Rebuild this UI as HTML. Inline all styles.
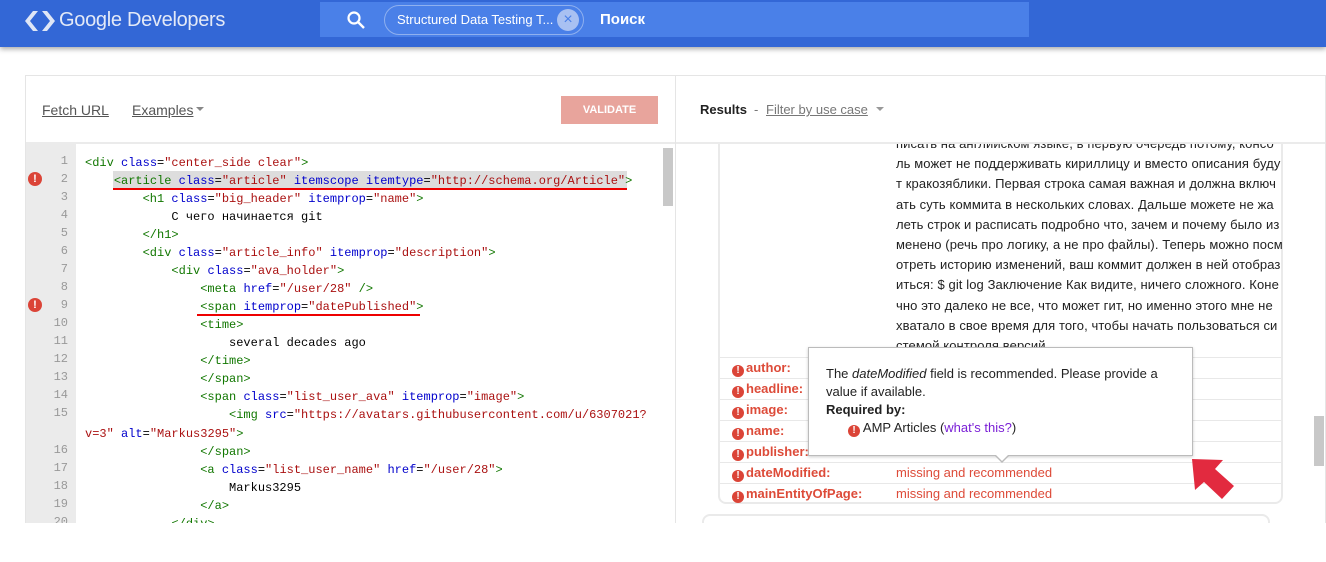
<!DOCTYPE html>
<html><head><meta charset="utf-8"><style>
*{margin:0;padding:0;box-sizing:border-box}
body{width:1326px;height:562px;background:#fff;font-family:"Liberation Sans",sans-serif;position:relative;overflow:hidden}
.hdr{position:absolute;left:0;top:0;width:1326px;height:47px;background:#3367d6;box-shadow:0 2px 5px rgba(0,0,0,.35)}
.logo{position:absolute;left:59px;top:9px;color:#e3e9f7;font-size:20px;letter-spacing:-.3px}
.sbox{position:absolute;left:320px;top:2px;width:709px;height:35px;background:#4a80e8}
.chip{position:absolute;left:384px;top:5px;width:200px;height:30px;border:1px solid #8fb0ef;border-radius:15px;color:#fff;font-size:13px;line-height:28px;padding-left:12px}
.chip .x{position:absolute;right:4px;top:3px;width:22px;height:22px;border-radius:50%;background:#a9c1f2;color:#4a80e8;text-align:center;line-height:21px;font-size:16px}
.poisk{position:absolute;left:600px;top:11px;color:#fff;font-size:15px;font-weight:bold}
.lp{position:absolute;left:25px;top:75px;width:651px;height:448px;border:1px solid #e5e5e5;border-bottom:none;overflow:hidden}
.rp{position:absolute;left:675px;top:75px;width:651px;height:448px;border:1px solid #e5e5e5;border-bottom:none;overflow:hidden}
.tb{position:absolute;left:0;top:0;width:100%;height:68px;border-bottom:2px solid #ebebeb;background:#fff;z-index:3}
.lnk{position:absolute;top:26px;font-size:14px;color:#555;text-decoration:underline}
.val{position:absolute;left:535px;top:20px;width:97px;height:28px;background:#e8a49c;color:#fff;font-size:11px;font-weight:bold;text-align:center;line-height:28px}
.gut{position:absolute;left:0;top:68px;width:50px;height:400px;background:#ebebeb}
.code{font-family:"Liberation Mono",monospace;font-size:12px;white-space:pre;position:absolute;color:#000}
.n{position:absolute;width:20px;text-align:right;left:48px;color:#999;font-family:"Liberation Mono",monospace;font-size:12px}
.t{color:#170}.a{color:#00c}.s{color:#a11}
.err{position:absolute;width:14px;height:14px;border-radius:50%;background:#db4437;color:#fff;font-size:11px;font-weight:bold;text-align:center;line-height:14px}
.sc{position:absolute;width:10px;height:58px;background:#c8c8c8}
.card{position:absolute;left:42px;top:40px;width:565px;height:388px;border:2px solid #eaeaea;border-radius:8px;background:#fff}
.desc{position:absolute;left:220px;top:58px;width:400px;font-size:13px;line-height:20.2px;color:#222;white-space:nowrap;letter-spacing:.1px}
.row{position:absolute;left:44px;width:561px;height:21px;border-top:1px solid #e8e8e8;font-size:13px;color:#dd4b39;font-weight:bold;line-height:20px}
.row .ic{display:inline-block;width:12px;height:12px;border-radius:50%;background:#db4437;color:#fff;font-size:10px;text-align:center;line-height:12px;margin:0 2px 0 12px;vertical-align:-1px}
.row .v{position:absolute;left:176px;font-weight:normal}
.tip{position:absolute;left:808px;top:347px;width:385px;height:109px;background:#fff;border:1px solid #bbb;box-shadow:0 1px 3px rgba(0,0,0,.2);font-size:13px;color:#222;padding:17px 0 0 17px;line-height:18px;z-index:5}
</style></head><body>
<div class="hdr">
<svg style="position:absolute;left:24px;top:10px" width="32" height="22" viewBox="0 0 32 22"><path d="M9 1L1 11l8 10h5L6 11l8-10z" fill="#dfe6f6"/><path d="M23 1l8 10-8 10h-5l8-10-8-10z" fill="#dfe6f6"/></svg>
<div class="logo">Google Developers</div>
<div class="sbox"></div>
<svg style="position:absolute;left:346px;top:10px" width="20" height="20" viewBox="0 0 20 20"><circle cx="8" cy="8" r="5.5" stroke="#fff" stroke-width="2.2" fill="none"/><path d="M12 12l6 6" stroke="#fff" stroke-width="2.4"/></svg>
<div class="chip">Structured Data Testing T...<span class="x">×</span></div>
<div class="poisk">Поиск</div>
</div>

<div class="lp">
<div class="tb"><span class="lnk" style="left:16px">Fetch URL</span><span class="lnk" style="left:106px">Examples</span><span style="position:absolute;left:170px;top:31px;border:4px solid transparent;border-top:4px solid #888"></span><div class="val">VALIDATE</div></div>
<div class="gut"></div>
</div>
<div style="position:absolute;left:113px;top:171px;width:514px;height:18px;background:#ddd"></div>
<div style="position:absolute;left:113px;top:188px;width:514px;height:2px;background:#e00"></div>
<div style="position:absolute;left:197px;top:314px;width:223px;height:2px;background:#e00"></div>
<div class="sc" style="left:663px;top:148px"></div>
<div class="err" style="left:28px;top:172px">!</div>
<div class="err" style="left:28px;top:298px">!</div>
<div style="position:absolute;left:0;top:0">
<div class="n" style="top:154px">1</div><div class="n" style="top:172px">2</div><div class="n" style="top:190px">3</div><div class="n" style="top:208px">4</div><div class="n" style="top:226px">5</div><div class="n" style="top:244px">6</div><div class="n" style="top:262px">7</div><div class="n" style="top:280px">8</div><div class="n" style="top:298px">9</div><div class="n" style="top:316px">10</div><div class="n" style="top:334px">11</div><div class="n" style="top:352px">12</div><div class="n" style="top:370px">13</div><div class="n" style="top:388px">14</div><div class="n" style="top:406px">15</div><div class="n" style="top:443px">16</div><div class="n" style="top:461px">17</div><div class="n" style="top:479px">18</div><div class="n" style="top:497px">19</div><div class="n" style="top:515px">20</div>
</div>
<div class="code" style="left:85px;top:154px;line-height:18px"><span class="t">&lt;div</span> <span class="a">class</span>=<span class="s">"center_side clear"</span><span class="t">&gt;</span>
    <span class="t">&lt;article</span> <span class="a">class</span>=<span class="s">"article"</span> <span class="a">itemscope</span> <span class="a">itemtype</span>=<span class="s">"http://schema.org/Article"</span><span class="t">&gt;</span>
        <span class="t">&lt;h1</span> <span class="a">class</span>=<span class="s">"big_header"</span> <span class="a">itemprop</span>=<span class="s">"name"</span><span class="t">&gt;</span>
            С чего начинается git
        <span class="t">&lt;/h1&gt;</span>
        <span class="t">&lt;div</span> <span class="a">class</span>=<span class="s">"article_info"</span> <span class="a">itemprop</span>=<span class="s">"description"</span><span class="t">&gt;</span>
            <span class="t">&lt;div</span> <span class="a">class</span>=<span class="s">"ava_holder"</span><span class="t">&gt;</span>
                <span class="t">&lt;meta</span> <span class="a">href</span>=<span class="s">"/user/28"</span> <span class="t">/&gt;</span>
                <span class="t">&lt;span</span> <span class="a">itemprop</span>=<span class="s">"datePublished"</span><span class="t">&gt;</span>
                <span class="t">&lt;time&gt;</span>
                    several decades ago
                <span class="t">&lt;/time&gt;</span>
                <span class="t">&lt;/span&gt;</span>
                <span class="t">&lt;span</span> <span class="a">class</span>=<span class="s">"list_user_ava"</span> <span class="a">itemprop</span>=<span class="s">"image"</span><span class="t">&gt;</span>
                    <span class="t">&lt;img</span> <span class="a">src</span>=<span class="s">"https://avatars.githubusercontent.com/u/6307021?</span></div>
<div class="code" style="left:85px;top:425px;line-height:18px"><span class="s">v=3"</span> <span class="a">alt</span>=<span class="s">"Markus3295"</span><span class="t">&gt;</span>
                <span class="t">&lt;/span&gt;</span>
                <span class="t">&lt;a</span> <span class="a">class</span>=<span class="s">"list_user_name"</span> <span class="a">href</span>=<span class="s">"/user/28"</span><span class="t">&gt;</span>
                    Markus3295
                <span class="t">&lt;/a&gt;</span>
            <span class="t">&lt;/div&gt;</span></div>
<div style="position:absolute;left:0;top:523px;width:1326px;height:39px;background:#fff"></div>

<div class="rp">
<div class="card"></div>
<div class="desc">писать на английском языке, в первую очередь потому, консо<br>ль может не поддерживать кириллицу и вместо описания буду<br>т кракозяблики. Первая строка самая важная и должна включ<br>ать суть коммита в нескольких словах. Дальше можете не жа<br>леть строк и расписать подробно что, зачем и почему было из<br>менено (речь про логику, а не про файлы). Теперь можно посм<br>отреть историю изменений, ваш коммит должен в ней отобраз<br>иться: $ git log Заключение Как видите, ничего сложного. Коне<br>чно это далеко не все, что может гит, но именно этого мне не<br>хватало в свое время для того, чтобы начать пользоваться си<br>стемой контроля версий</div>
<div class="row" style="top:281px"><span class="ic">!</span>author:</div>
<div class="row" style="top:302px"><span class="ic">!</span>headline:</div>
<div class="row" style="top:323px"><span class="ic">!</span>image:</div>
<div class="row" style="top:344px"><span class="ic">!</span>name:</div>
<div class="row" style="top:365px"><span class="ic">!</span>publisher:</div>
<div class="row" style="top:386px"><span class="ic">!</span>dateModified:<span class="v">missing and recommended</span></div>
<div class="row" style="top:407px;height:19px"><span class="ic">!</span>mainEntityOfPage:<span class="v">missing and recommended</span></div>
<div style="position:absolute;left:26px;top:438px;width:568px;height:30px;border:2px solid #eaeaea;border-radius:8px"></div>
<div class="tb"><span style="position:absolute;left:24px;top:26px;font-size:13px;font-weight:bold;color:#222">Results</span><span style="position:absolute;left:78px;top:26px;font-size:13px;color:#777">-</span><span class="lnk" style="left:90px;font-size:13px;color:#777">Filter by use case</span><span style="position:absolute;left:200px;top:31px;border:4px solid transparent;border-top:4px solid #999"></span></div>
<div style="position:absolute;left:638px;top:340px;width:10px;height:50px;background:#c8c8c8"></div>
</div>

<div class="tip">The <i>dateModified</i> field is recommended. Please provide a<br>value if available.<br><b>Required by:</b><br><span style="display:inline-block;margin-left:22px"><span style="display:inline-block;width:12px;height:12px;border-radius:50%;background:#db4437;color:#fff;font-size:10px;text-align:center;line-height:12px;font-weight:bold;vertical-align:-1px">!</span> AMP Articles (<span style="color:#7a1fd6">what's this?</span>)</span></div>
<div style="position:absolute;left:994px;top:455px;width:0;height:0;border:8px solid transparent;border-top:8px solid #bbb;z-index:6"></div>
<div style="position:absolute;left:995px;top:454px;width:0;height:0;border:7px solid transparent;border-top:7px solid #fff;z-index:6"></div>
<svg style="position:absolute;left:1188px;top:455px" width="50" height="48" viewBox="1188 455 50 48"><path d="M1192 459L1223 460L1215 469L1234 486L1222 499L1204 482L1195 490Z" fill="#e22a3f"/></svg>
</body></html>
